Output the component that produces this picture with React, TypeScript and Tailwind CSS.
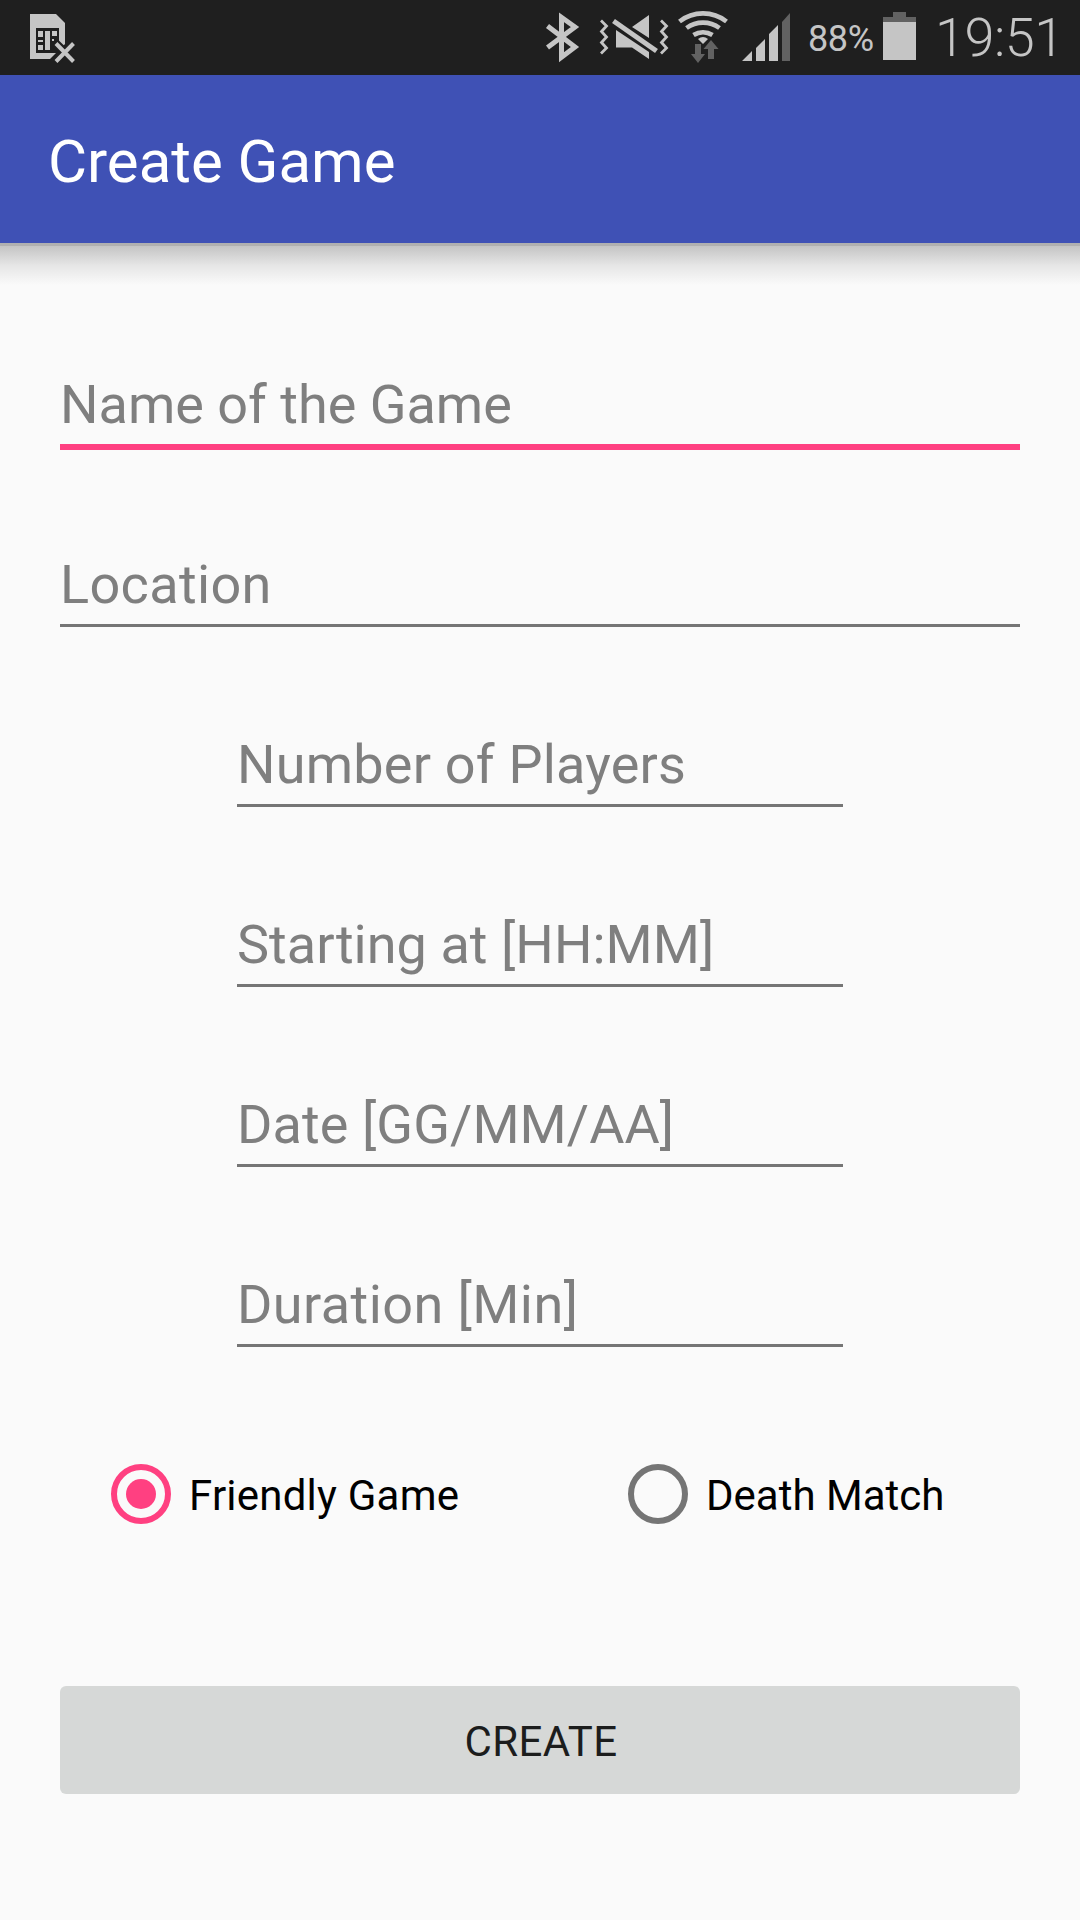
import React from "react";

const LIGHT = "#c5c5c5";
const DIM = "#626262";
const BAR = "#1f1f1f";

function StatusBar() {
  return (
    <div className="flex h-[75px] w-full shrink-0 items-center bg-[#1f1f1f] text-[#c5c5c5]">
      {/* SIM missing */}
      <svg className="ml-[24px] h-[75px] w-[60px] shrink-0" viewBox="24 0 60 75">
        <path d="M30 14H56L65 23V44L50 59H30Z" fill={LIGHT} />
        <path d="M36 28H59V53H36Z" fill={BAR} />
        <path d="M38 31h5v6h-5zM45 31h5v19h-5zM52 31h5v5h-5zM38 40h5v2h-5zM38 45h5v5h-5zM52 39h2v2h-2z" fill={LIGHT} />
        <path d="M56 44L73.500 61M73.500 44L56 61" stroke={BAR} strokeWidth="9" />
        <path d="M56 43.500L73.500 61.500M73.500 43.500L56 61.500" stroke={LIGHT} strokeWidth="4" />
      </svg>
      {/* Bluetooth, vibrate, wifi, signal */}
      <svg className="ml-[446px] h-[75px] w-[270px] shrink-0" viewBox="530 0 270 75" fill="none">
        <path d="M547.500 26L575 47L561.500 57.200V17.300L575 27L547.500 47.500" stroke={LIGHT} strokeWidth="5" strokeMiterlimit="10" />
        <path d="M601 20.500L606.500 26L601.500 31.500L606.500 37L601.500 42.500L606.500 48L601 53.500" stroke={LIGHT} strokeWidth="2.800" />
        <path d="M661 20.500L666.500 26L661.500 31.500L666.500 37L661.500 42.500L666.500 48L661 53.500" stroke={LIGHT} strokeWidth="2.800" />
        <path d="M649 15V38L632 27ZM616 30L649 52V59L632 47.500H616Z" fill={LIGHT} />
        <path d="M613.500 21L656.500 51" stroke={LIGHT} strokeWidth="5" />
        <path d="M679.500 21.500A38 38 0 0 1 726.500 21.500M686.500 28A28 28 0 0 1 719.500 28M693.500 35A18 18 0 0 1 712.500 35" stroke={LIGHT} strokeWidth="4.600" />
        <path d="M703 44L698 39Q703 35 708 39Z" fill={LIGHT} />
        <path d="M695 44h6v10h4l-7 9l-7 -9h4zM714 59h-6V49h-4.500l7.500 -9l7.500 9H714z" fill={DIM} />
        <path d="M742 61L752 51V61ZM756 48L765 39V61H756ZM769 34L778 25V61H769Z" fill={LIGHT} />
        <path d="M782 22L790 13V61H782Z" fill={DIM} />
      </svg>
      <span className="ml-[8px] w-[75px] whitespace-nowrap pt-[3px] text-[36px] leading-[42px] tracking-[-0.4px]">88%</span>
      <svg className="h-[75px] w-[33px] shrink-0" viewBox="883 0 33 75">
        <path d="M893 12h13v5h10v5h-33v-5h10z" fill={DIM} />
        <path d="M883 22h33v38h-33z" fill={LIGHT} />
      </svg>
      <span className="ml-[19px] whitespace-nowrap text-[54px] font-light leading-[63px] tracking-[-0.5px]">19:51</span>
    </div>
  );
}

type FieldProps = { label: string; tracking?: string; active?: boolean; wide?: boolean };

function Field({ label, tracking = "", active = false, wide = false }: FieldProps) {
  return (
    <div className={`flex h-[180px] flex-col justify-end ${wide ? "w-[960px]" : "w-[606px]"}`}>
      <span className={`mb-[8px] whitespace-nowrap text-[54px] leading-[63px] text-[#7f7f7f] ${tracking}`}>{label}</span>
      <div className="h-[6px]">
        <div className={active ? "h-[6px] bg-[#ff4081]" : "h-[3px] bg-[#757575]"} />
      </div>
    </div>
  );
}

function Radio({ label, tracking = "", checked = false }: { label: string; tracking?: string; checked?: boolean }) {
  return (
    <label className="flex w-[517px] shrink-0 items-center gap-[18px]">
      <span
        className={`flex size-[60px] items-center justify-center rounded-full border-[6px] ${
          checked ? "border-[#ff4081]" : "border-[#757575]"
        }`}
      >
        {checked && <span className="size-[30px] rounded-full bg-[#ff4081]" />}
      </span>
      <span className={`whitespace-nowrap pt-[3px] text-[42px] leading-[49px] text-black ${tracking}`}>{label}</span>
    </label>
  );
}

export default function App() {
  return (
    <div className="flex h-[1920px] w-[1080px] flex-col overflow-hidden bg-[#fafafa] font-[Roboto,sans-serif]">
      <StatusBar />
      <header className="flex h-[168px] shrink-0 items-center bg-[#3f51b5] pl-[48px]">
        <h1 className="pt-[5px] text-[60px] leading-[71px] text-white">Create Game</h1>
      </header>
      <div className="h-[3px] shrink-0 bg-[#b0b0b0]" />
      <div className="h-[39px] shrink-0 bg-linear-to-b from-[#c4c4c4] via-[#e6e6e6] to-[#fafafa]" />
      <main className="-mt-[15px] flex flex-col items-center">
        <Field label="Name of the Game" active wide />
        <Field label="Location" tracking="tracking-[0.35px]" wide />
        <Field label="Number of Players" tracking="tracking-[0.22px]" />
        <Field label="Starting at [HH:MM]" tracking="tracking-[0.04px]" />
        <Field label="Date [GG/MM/AA]" tracking="tracking-[0.08px]" />
        <Field label="Duration [Min]" tracking="tracking-[0.43px]" />
        <div className="mt-[114px] flex h-[60px] w-full pl-[111px]">
          <Radio label="Friendly Game" tracking="tracking-[0.22px]" checked />
          <Radio label="Death Match" />
        </div>
        <button className="mt-[162px] h-[108px] w-[960px] rounded-[6px] bg-[#d6d8d7] pl-[2px] pt-[3px] text-[42px] leading-[49px] tracking-[0.4px] text-[#1c1d1d]">
          CREATE
        </button>
      </main>
    </div>
  );
}
